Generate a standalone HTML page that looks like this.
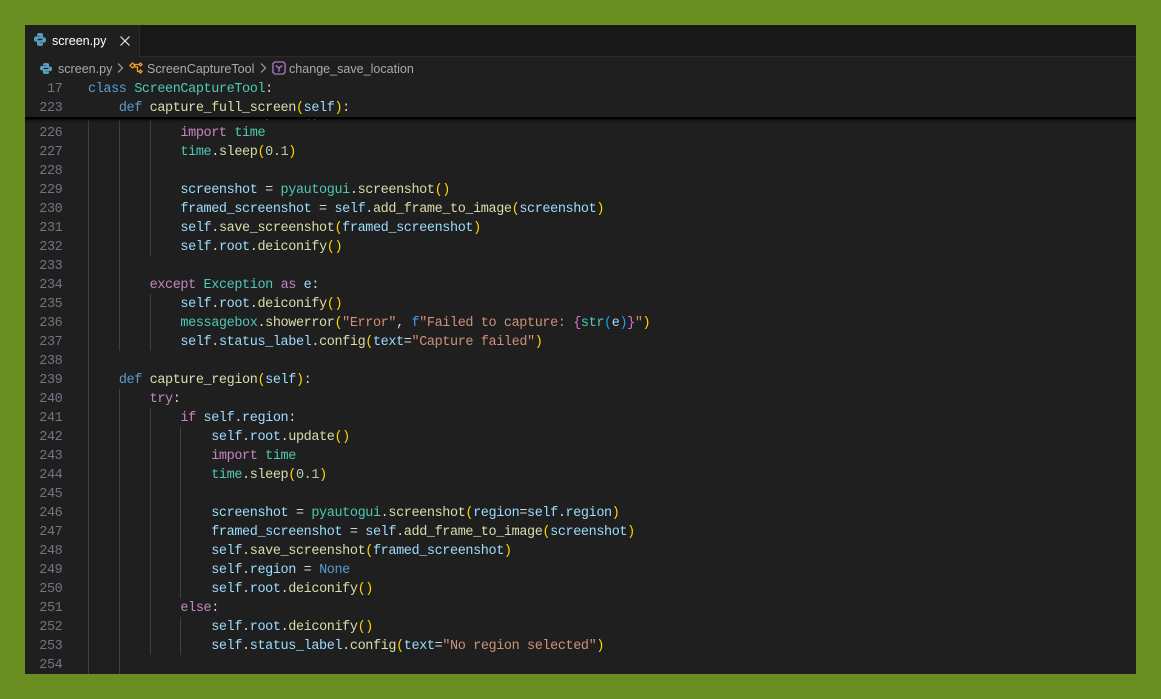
<!DOCTYPE html>
<html><head><meta charset="utf-8"><style>
html,body{margin:0;padding:0}
body{width:1161px;height:699px;background:#6b8e23;position:relative;overflow:hidden}
#w{position:absolute;left:25px;top:25px;width:1111px;height:649px;background:#1f1f1f;overflow:hidden}
#w>*{position:absolute}
.tb{left:0;top:0;width:1111px;height:31px;background:#181818;border-bottom:1px solid #2b2b2b}
.tab{left:0;top:0;width:114px;height:32px;background:#1f1f1f;border-right:1px solid #2b2b2b}
.ui{font:12.55px/17px "Liberation Sans",sans-serif;white-space:pre}
.g{width:1px;background:#404040}
#c{left:0;top:98.5px;width:1111px;font:13.5px/19px "Liberation Mono",monospace;letter-spacing:-.4px;color:#d4d4d4}
#s{left:0;top:54px;width:1111px;height:37px;padding-top:1px;background:#1f1f1f;font:13.5px/19px "Liberation Mono",monospace;letter-spacing:-.4px;color:#d4d4d4}
.l{position:relative;height:19px;white-space:pre;padding-left:63px}
.n{position:absolute;left:0;width:37.4px;text-align:right;color:#6e7681}
.k{color:#c586c0}.b{color:#569cd6}.t{color:#4ec9b0}.f{color:#dcdcaa}.v{color:#9cdcfe}.r{color:#ce9178}.u{color:#b5cea8}.y{color:#ffd700}.o{color:#da70d6}.q{color:#179fff}
.sh{left:0;top:92px;width:1111px;height:6px;background:linear-gradient(#000 0,#000 30%,rgba(0,0,0,.35) 50%,rgba(0,0,0,0) 100%)}
</style></head><body>
<div id="w">
<div class="g" style="left:63px;top:92px;height:557px"></div>
<div class="g" style="left:94px;top:92px;height:234px"></div>
<div class="g" style="left:94px;top:364px;height:285px"></div>
<div class="g" style="left:125px;top:92px;height:139px"></div>
<div class="g" style="left:125px;top:269px;height:57px"></div>
<div class="g" style="left:125px;top:383px;height:247px"></div>
<div class="g" style="left:155px;top:402px;height:171px"></div>
<div class="g" style="left:155px;top:592px;height:38px"></div>
<div id="c">
<div class="l" style="margin-top:-19px"><span class="n">225</span>            <span class="v">self</span>.<span class="v">root</span>.<span class="f">update</span><span class="y">()</span></div>
<div class="l"><span class="n">226</span>            <span class="k">import</span> <span class="t">time</span></div>
<div class="l"><span class="n">227</span>            <span class="t">time</span>.<span class="f">sleep</span><span class="y">(</span><span class="u">0.1</span><span class="y">)</span></div>
<div class="l"><span class="n">228</span></div>
<div class="l"><span class="n">229</span>            <span class="v">screenshot</span> = <span class="t">pyautogui</span>.<span class="f">screenshot</span><span class="y">()</span></div>
<div class="l"><span class="n">230</span>            <span class="v">framed_screenshot</span> = <span class="v">self</span>.<span class="f">add_frame_to_image</span><span class="y">(</span><span class="v">screenshot</span><span class="y">)</span></div>
<div class="l"><span class="n">231</span>            <span class="v">self</span>.<span class="f">save_screenshot</span><span class="y">(</span><span class="v">framed_screenshot</span><span class="y">)</span></div>
<div class="l"><span class="n">232</span>            <span class="v">self</span>.<span class="v">root</span>.<span class="f">deiconify</span><span class="y">()</span></div>
<div class="l"><span class="n">233</span></div>
<div class="l"><span class="n">234</span>        <span class="k">except</span> <span class="t">Exception</span> <span class="k">as</span> <span class="v">e</span>:</div>
<div class="l"><span class="n">235</span>            <span class="v">self</span>.<span class="v">root</span>.<span class="f">deiconify</span><span class="y">()</span></div>
<div class="l"><span class="n">236</span>            <span class="t">messagebox</span>.<span class="f">showerror</span><span class="y">(</span><span class="r">"Error"</span>, <span class="b">f</span><span class="r">"Failed to capture: </span><span class="o">{</span><span class="t">str</span><span class="q">(</span><span class="v">e</span><span class="q">)</span><span class="o">}</span><span class="r">"</span><span class="y">)</span></div>
<div class="l"><span class="n">237</span>            <span class="v">self</span>.<span class="v">status_label</span>.<span class="f">config</span><span class="y">(</span><span class="v">text</span>=<span class="r">"Capture failed"</span><span class="y">)</span></div>
<div class="l"><span class="n">238</span></div>
<div class="l"><span class="n">239</span>    <span class="b">def</span> <span class="f">capture_region</span><span class="y">(</span><span class="v">self</span><span class="y">)</span>:</div>
<div class="l"><span class="n">240</span>        <span class="k">try</span>:</div>
<div class="l"><span class="n">241</span>            <span class="k">if</span> <span class="v">self</span>.<span class="v">region</span>:</div>
<div class="l"><span class="n">242</span>                <span class="v">self</span>.<span class="v">root</span>.<span class="f">update</span><span class="y">()</span></div>
<div class="l"><span class="n">243</span>                <span class="k">import</span> <span class="t">time</span></div>
<div class="l"><span class="n">244</span>                <span class="t">time</span>.<span class="f">sleep</span><span class="y">(</span><span class="u">0.1</span><span class="y">)</span></div>
<div class="l"><span class="n">245</span></div>
<div class="l"><span class="n">246</span>                <span class="v">screenshot</span> = <span class="t">pyautogui</span>.<span class="f">screenshot</span><span class="y">(</span><span class="v">region</span>=<span class="v">self</span>.<span class="v">region</span><span class="y">)</span></div>
<div class="l"><span class="n">247</span>                <span class="v">framed_screenshot</span> = <span class="v">self</span>.<span class="f">add_frame_to_image</span><span class="y">(</span><span class="v">screenshot</span><span class="y">)</span></div>
<div class="l"><span class="n">248</span>                <span class="v">self</span>.<span class="f">save_screenshot</span><span class="y">(</span><span class="v">framed_screenshot</span><span class="y">)</span></div>
<div class="l"><span class="n">249</span>                <span class="v">self</span>.<span class="v">region</span> = <span class="b">None</span></div>
<div class="l"><span class="n">250</span>                <span class="v">self</span>.<span class="v">root</span>.<span class="f">deiconify</span><span class="y">()</span></div>
<div class="l"><span class="n">251</span>            <span class="k">else</span>:</div>
<div class="l"><span class="n">252</span>                <span class="v">self</span>.<span class="v">root</span>.<span class="f">deiconify</span><span class="y">()</span></div>
<div class="l"><span class="n">253</span>                <span class="v">self</span>.<span class="v">status_label</span>.<span class="f">config</span><span class="y">(</span><span class="v">text</span>=<span class="r">"No region selected"</span><span class="y">)</span></div>
<div class="l"><span class="n">254</span></div>
</div>
<div id="s">
<div class="l"><span class="n">17</span><span class="b">class</span> <span class="t">ScreenCaptureTool</span>:</div>
<div class="l"><span class="n">223</span>    <span class="b">def</span> <span class="f">capture_full_screen</span><span class="y">(</span><span class="v">self</span><span class="y">)</span>:</div>
</div>
<div class="sh"></div>
<div class="tb"></div>
<div class="tab"></div>
<svg style="left:9px;top:8px" width="12" height="13" viewBox="0 0 12 13"><g fill="#5a9fc0"><path d="M3 1.500C3 .4 4.500 0 6 0C7.600 0 9 .4 9 1.500V5C9 5.500 8.600 5.800 8 5.800H5C4 5.800 3.400 6.400 3.400 7.400V8.800H1.800C.6 8.800 0 7.600 0 6.200C0 4.600 .6 3.400 1.800 3.400H6.300V2.900H3Z"/><path d="M3 1.500C3 .4 4.500 0 6 0C7.600 0 9 .4 9 1.500V5C9 5.500 8.600 5.800 8 5.800H5C4 5.800 3.400 6.400 3.400 7.400V8.800H1.800C.6 8.800 0 7.600 0 6.200C0 4.600 .6 3.400 1.800 3.400H6.300V2.900H3Z" transform="rotate(180 6 6.500)"/></g></svg>
<div class="ui" style="left:27px;top:8px;color:#fff">screen.py</div>
<svg style="left:95px;top:11px" width="10" height="10" viewBox="0 0 10 10"><path d="M.5.5L9.500 9.500M9.500.5L.5 9.500" stroke="#e0e0e0" stroke-width="1.200" fill="none"/></svg>
<svg style="left:15px;top:38px" width="12" height="11" viewBox="0 0 12 13" preserveAspectRatio="none"><g fill="#5a9fc0"><path d="M3 1.500C3 .4 4.500 0 6 0C7.600 0 9 .4 9 1.500V5C9 5.500 8.600 5.800 8 5.800H5C4 5.800 3.400 6.400 3.400 7.400V8.800H1.800C.6 8.800 0 7.600 0 6.200C0 4.600 .6 3.400 1.800 3.400H6.300V2.900H3Z"/><path d="M3 1.500C3 .4 4.500 0 6 0C7.600 0 9 .4 9 1.500V5C9 5.500 8.600 5.800 8 5.800H5C4 5.800 3.400 6.400 3.400 7.400V8.800H1.800C.6 8.800 0 7.600 0 6.200C0 4.600 .6 3.400 1.800 3.400H6.300V2.900H3Z" transform="rotate(180 6 6.500)"/></g></svg>
<div class="ui" style="left:33px;top:36px;color:#a9a9a9">screen.py</div>
<svg style="left:92px;top:38px" width="7" height="10" viewBox="0 0 7 10"><path d="M1 .5L5.500 5L1 9.500" stroke="#a9a9a9" stroke-width="1.100" fill="none"/></svg>
<svg style="left:104px;top:37px" width="15" height="13" viewBox="0 0 15 13"><g fill="none" stroke="#ee9d28" stroke-width="1.300"><path d="M1 3.500L3.500 1L6 3.500L3.500 6Z"/><path d="M10 2.500L11.500 1L13 2.500L11.500 4Z"/><path d="M10 9.500L11.500 8L13 9.500L11.500 11Z"/><path d="M5 2.500H10M5 5L8.500 5V9.500H10"/></g></svg>
<div class="ui" style="left:122px;top:36px;color:#a9a9a9">ScreenCaptureTool</div>
<svg style="left:235px;top:38px" width="7" height="10" viewBox="0 0 7 10"><path d="M1 .5L5.500 5L1 9.500" stroke="#a9a9a9" stroke-width="1.100" fill="none"/></svg>
<svg style="left:247px;top:36px" width="14" height="14" viewBox="0 0 15 15"><g fill="none" stroke="#b180d7" stroke-width="1.300"><path d="M3 1H12L14 3V12L12 14H3L1 12V3Z"/><path d="M4 5L7.500 7.500L11 5M7.500 7.500V11.500"/></g></svg>
<div class="ui" style="left:264px;top:36px;color:#a9a9a9">change_save_location</div>
</div>
</body></html>
